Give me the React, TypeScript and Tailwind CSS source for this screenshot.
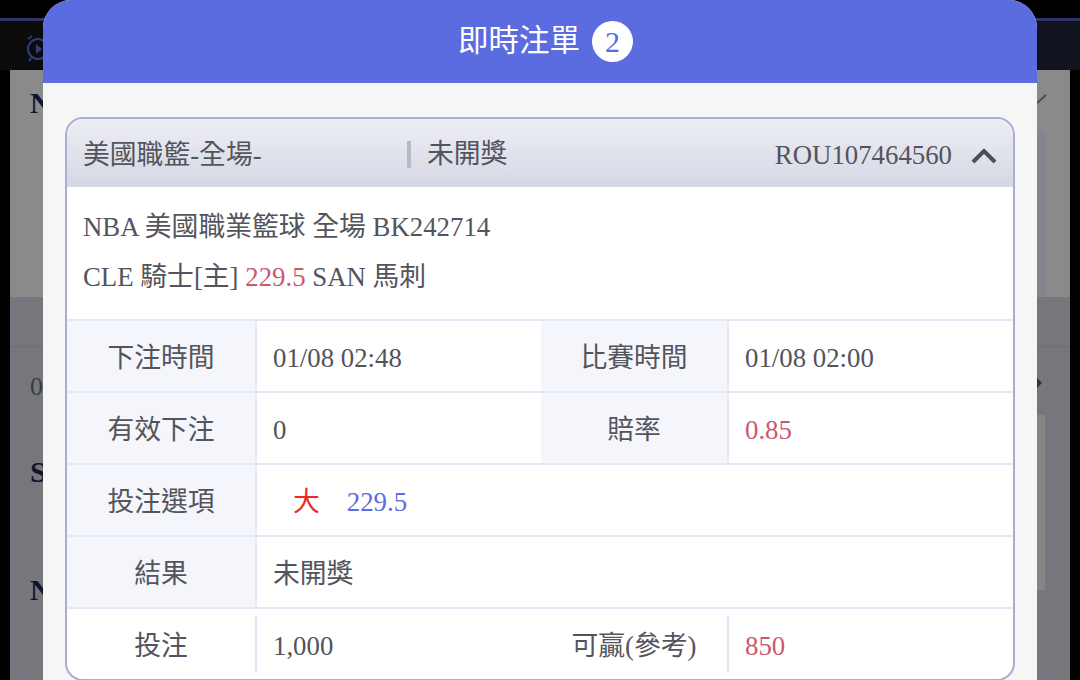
const font = "font-['Liberation_Serif','Noto_Sans_CJK_TC',serif]"

function Label({ children, tinted = true }: { children: React.ReactNode; tinted?: boolean }) {
  return (
    <div className={`flex h-full w-[188px] shrink-0 items-center justify-center pt-[5px] ${tinted ? 'bg-[#f5f6fb]' : ''}`}>
      {children}
    </div>
  )
}

function Row({ children }: { children: React.ReactNode }) {
  return <div className="flex h-[72px] items-center border-t-2 border-[#e6e7f5]">{children}</div>
}

function Value({ children, className = 'flex-1' }: { children: React.ReactNode; className?: string }) {
  return (
    <div className={`flex h-full min-w-0 items-center border-l-2 border-[#e6e7f5] pt-[5px] pl-4 ${className}`}>
      {children}
    </div>
  )
}

function Background() {
  return (
    <div className="relative flex h-[680px] w-[1080px] flex-col overflow-hidden bg-black">
      <div className="mt-[18px] h-[3px] bg-[#2c3566]" />
      <div className="flex h-[49px] items-center bg-gradient-to-r from-[#0b0b0c] to-[#11131f] pt-1 pl-[26px]">
        <svg width="24" height="28" viewBox="0 0 24 28" fill="none" stroke="#2f3d78" strokeWidth="2">
          <circle cx="12" cy="15" r="10" />
          <path d="M2 5l4-3M22 5l-4-3M5 24l-2 3M19 24l2 3" />
          <path d="M10 10l6 5-6 5z" fill="#2f3d78" stroke="none" />
        </svg>
      </div>
      <div className="mx-[10px] flex flex-1 flex-col bg-[#76777d] pl-[20px] font-bold text-[#10142e]">
        <div className="-ml-[20px] h-[227px] bg-[#8a8a8a] pt-[15px] pl-[20px] text-[30px] leading-[36px]">N</div>
        <div className="-ml-[20px] h-[50px] border-b border-[#6d6e74]" />
        <div className="pt-[20px] text-[26px] font-normal text-[#3a3b42]">0</div>
        <div className="pt-[48px] text-[30px] leading-[36px]">S</div>
        <div className="pt-[82px] text-[30px] leading-[36px]">N</div>
      </div>
      {/* bits of the page behind the modal that stick out on the right */}
      <div className="absolute top-[130px] left-[1037px] h-[167px] w-2 bg-[#84848c]" />
      <div className="absolute top-[415px] left-[1037px] h-[175px] w-2 bg-[#858585]" />
      <svg className="absolute top-[92px] left-[1037px]" width="10" height="14" viewBox="0 0 10 14" fill="none" stroke="#4a4a50" strokeWidth="2">
        <path d="M0 11L9 3" />
      </svg>
      <svg className="absolute top-[376px] left-[1037px]" width="6" height="14" viewBox="0 0 6 14" fill="#33343a">
        <path d="M0 2l5 5-5 5z" />
      </svg>
    </div>
  )
}

export default function App() {
  return (
    <div className={`relative h-[680px] w-[1080px] overflow-hidden ${font} text-[26.8px] text-[#53545c]`}>
      <Background />
      <div className="absolute top-0 left-[43px] flex h-[700px] w-[994px] flex-col overflow-hidden rounded-t-[28px] bg-[#f6f6f7]">
        <div className="flex h-[83px] shrink-0 items-center justify-center gap-3 bg-[#5a6ce0] pl-[11px] text-[30.5px] text-white">
          <span>即時注單</span>
          <span className="flex h-[41px] w-[41px] items-center justify-center rounded-full bg-white text-[30px] text-[#5a6ce0]">2</span>
        </div>
        <div className="mx-[22px] mt-[34px] overflow-hidden rounded-[18px] border-2 border-[#a9aed3] bg-white">
          <div className="flex h-[68px] items-center bg-gradient-to-b from-[#eeeff4] to-[#d4d6e3] pt-[5px] pr-[16px] pl-4">
            <span className="w-[324px] shrink-0">美國職籃-全場-</span>
            <span className="h-[27px] w-1 shrink-0 -translate-y-px bg-[#b8bac6]" />
            <span className="ml-[16px] -translate-y-px">未開獎</span>
            <span className="ml-auto">ROU107464560</span>
            <svg className="ml-[19px]" width="26" height="17" viewBox="0 0 26 17" fill="none" stroke="#4d4e56" strokeWidth="4">
              <path d="M2 15L13 4l11 11" />
            </svg>
          </div>
          <div className="flex h-[132px] flex-col justify-center pb-[2px] pl-4 leading-[50px]">
            <div>NBA 美國職業籃球 全場 BK242714</div>
            <div>
              CLE 騎士[主] <span className="text-[#c9596f]">229.5</span> SAN 馬刺
            </div>
          </div>
          <Row>
            <Label>下注時間</Label>
            <Value>01/08 02:48</Value>
            <div className="flex h-full w-[186px] shrink-0 items-center justify-center bg-[#f5f6fb] pt-[5px]">比賽時間</div>
            <Value className="w-[286px]">01/08 02:00</Value>
          </Row>
          <Row>
            <Label>有效下注</Label>
            <Value>0</Value>
            <div className="flex h-full w-[186px] shrink-0 items-center justify-center bg-[#f5f6fb] pt-[5px]">賠率</div>
            <Value className="w-[286px] text-[#c9596f]">0.85</Value>
          </Row>
          <Row>
            <Label>投注選項</Label>
            <Value className="flex-1">
              <span className="ml-[20px] text-[#f0281e]">大</span>
              <span className="ml-[27px] text-[#5a6ce0]">229.5</span>
            </Value>
          </Row>
          <Row>
            <Label>結果</Label>
            <Value>未開獎</Value>
          </Row>
          <Row>
            <Label tinted={false}>投注</Label>
            <Value className="!h-[56px] flex-1">1,000</Value>
            <div className="flex h-full w-[186px] shrink-0 items-center justify-center pt-[5px]">可贏(參考)</div>
            <Value className="!h-[56px] w-[286px] text-[#c9596f]">850</Value>
          </Row>
        </div>
      </div>
    </div>
  )
}
